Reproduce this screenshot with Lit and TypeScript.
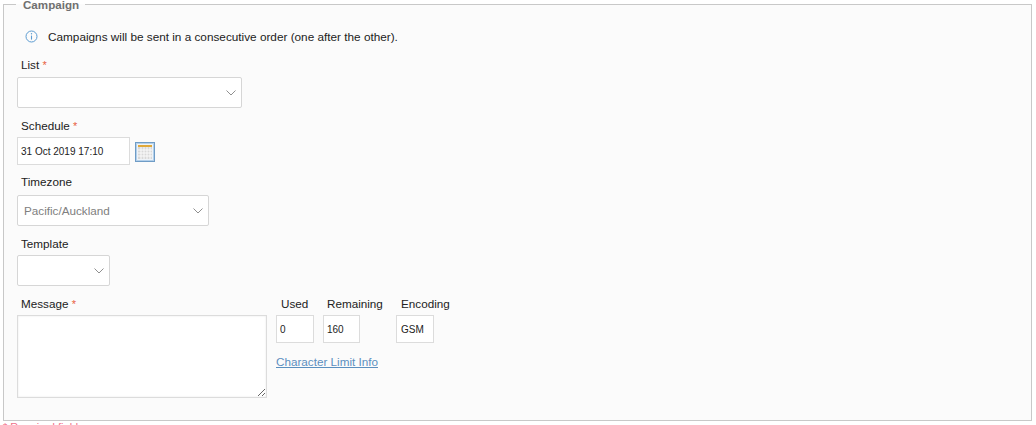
import { LitElement, html, css } from 'lit';
import { customElement } from 'lit/decorators.js';

const chevron = html`<svg class="chevron" width="10" height="6" viewBox="0 0 10 6"><path d="M.5.5L5 5 9.500.5" fill="none" stroke="#8f8f8f" stroke-width="1"/></svg>`;

@customElement('app-root')
export class AppRoot extends LitElement {
  static styles = css`
    :host {
      display: block;
      height: 425px;
      overflow: hidden;
      background: #fff;
      font-family: "Liberation Sans", Arial, sans-serif;
      font-size: 12px;
      color: #222;
    }
    .campaign {
      box-sizing: border-box;
      margin: 4px 4px 0 3px;
      height: 417px;
      border: 1px solid #c8c8c8;
      background: #fbfbfb;
      padding: 0 13px;
    }
    .legend {
      display: table;
      margin: -5px 0 0 -1px;
      padding: 0 6px 0 7px;
      height: 10px;
      line-height: 10px;
      font-weight: bold;
      font-size: 11.6px;
      color: #707070;
      background: linear-gradient(#fff 45%, #fbfbfb 45%);
    }
    .info {
      display: flex;
      align-items: center;
      gap: 10px;
      height: 14px;
      margin: 19px 0 0 8px;
      font-size: 11.77px;
    }
    .label {
      height: 14px;
      line-height: 14px;
      padding-left: 4px;
      font-size: 11.7px;
    }
    .req {
      color: #e8603f;
      font-size: 11px;
    }
    .select {
      box-sizing: border-box;
      display: flex;
      align-items: center;
      height: 31px;
      padding: 0 5px 0 6px;
      border: 1px solid #d6d6d6;
      border-radius: 2px;
      background: #fff;
      color: #808080;
      font-size: 11.7px;
    }
    .chevron {
      margin-left: auto;
      flex: none;
    }
    .list { width: 225px; margin-top: 5px; }
    .timezone { width: 192px; margin-top: 6px; }
    .template { width: 93px; margin-top: 4px; }
    .schedule-row {
      display: flex;
      align-items: center;
      gap: 5px;
      margin-top: 4px;
    }
    .field {
      box-sizing: border-box;
      height: 28px;
      line-height: 28px;
      border: 1px solid #dcdcdc;
      background: #fff;
      font-size: 10px;
      padding-left: 3px;
    }
    .date { width: 113px; }
    .calendar {
      display: block;
      margin-top: 2px;
    }
    .message-row {
      display: flex;
      gap: 9px;
      margin-top: 11px;
    }
    .message textarea {
      display: block;
      box-sizing: border-box;
      width: 250px;
      height: 83px;
      margin: 4px 0 0;
      border: 1px solid #dcdcdc;
      box-shadow: inset 0 0 2px #e4e4e4;
      background: #fff;
      outline: none;
    }
    .counters {
      display: grid;
      grid-template-columns: 38px 37px 38px;
      column-gap: 9px;
      grid-template-rows: 14px 28px;
      row-gap: 4px;
    }
    .counters .label {
      padding-left: 5px;
      white-space: nowrap;
    }
    .counters .label.remaining { padding-left: 4px; }
    .counters .encoding { margin-left: 27px; padding-left: 5px; }
    .counters .field.encoding { padding-left: 4px; width: 38px; }
    .link {
      display: block;
      margin-top: 12px;
      color: #5b8fbf;
      font-size: 11.7px;
      line-height: 14px;
    }
    .required-note {
      margin: 0 0 0 3px;
      color: #f0708a;
      font-size: 11px;
      line-height: 13px;
    }
  `;

  render() {
    return html`
      <div class="campaign">
        <div class="legend">Campaign</div>
        <div class="info">
          <svg width="13" height="13" viewBox="0 0 13 13">
            <circle cx="6.5" cy="6.5" r="5.5" fill="none" stroke="#5b9bd1" stroke-width="1"/>
            <path d="M6.5 5.6v4" stroke="#5b9bd1" stroke-width="1.1"/>
            <circle cx="6.5" cy="3.8" r=".7" fill="#5b9bd1"/>
          </svg>
          <span>Campaigns will be sent in a consecutive order (one after the other).</span>
        </div>

        <div class="label" style="margin-top:15px">List <span class="req">*</span></div>
        <div class="select list">${chevron}</div>

        <div class="label" style="margin-top:11px">Schedule <span class="req">*</span></div>
        <div class="schedule-row">
          <div class="field date">31 Oct 2019 17:10</div>
          <svg class="calendar" width="20" height="20" viewBox="0 0 20 20">
            <rect x=".5" y=".5" width="19" height="19" fill="#fff" stroke="#6f9cc6"/>
            <rect x="1.5" y="1.5" width="17" height="17" fill="#eef3f8" stroke="#b4d0ea"/>
            <rect x="3" y="3" width="14" height="2" fill="#e0a93a"/>
            <rect x="3" y="5" width="14" height="12" fill="#d8d8d8"/>
            <path d="M3 8h14M3 11h14M3 14h14M6 5v12M9 5v12M12 5v12M15 5v12" stroke="#fafafa" stroke-width="1"/>
          </svg>
        </div>

        <div class="label" style="margin-top:10px">Timezone</div>
        <div class="select timezone"><span>Pacific/Auckland</span>${chevron}</div>

        <div class="label" style="margin-top:11px">Template</div>
        <div class="select template">${chevron}</div>

        <div class="message-row">
          <div class="message">
            <div class="label">Message <span class="req">*</span></div>
            <textarea></textarea>
          </div>
          <div>
            <div class="counters">
              <div class="label">Used</div>
              <div class="label remaining">Remaining</div>
              <div class="label encoding">Encoding</div>
              <div class="field">0</div>
              <div class="field">160</div>
              <div class="field encoding">GSM</div>
            </div>
            <a class="link" href="#">Character Limit Info</a>
          </div>
        </div>
      </div>
      <div class="required-note">* Required field</div>
    `;
  }
}
